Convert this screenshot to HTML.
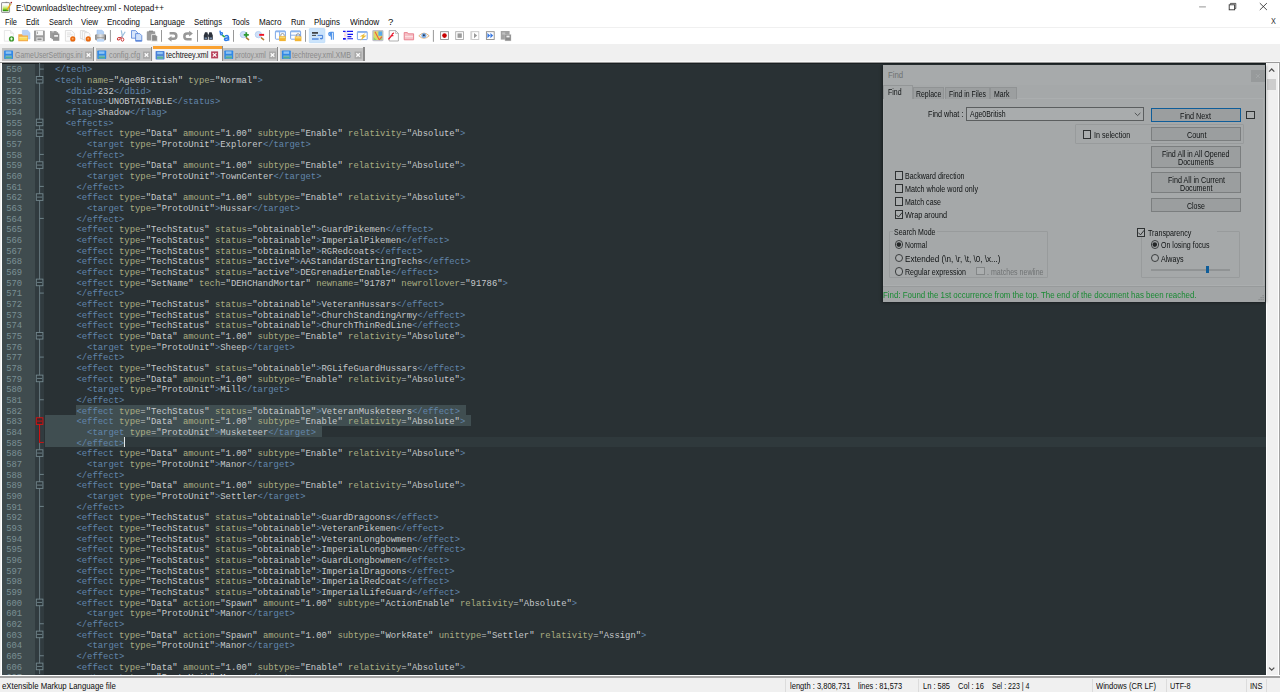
<!DOCTYPE html>
<html><head><meta charset="utf-8"><title>Notepad++</title>
<style>
*{margin:0;padding:0;box-sizing:border-box}
html,body{width:1280px;height:692px;overflow:hidden;background:#fff}
body{position:relative;font-family:"Liberation Sans",sans-serif;font-size:8px;color:#000;line-height:1}
.abs,.ln,.cl,.sel,.cur,.caret,.fold,.t{position:absolute}
.t{white-space:nowrap;transform-origin:0 50%}
#edwrap{position:absolute;left:0;top:0;width:1280px;height:692px;overflow:hidden;clip-path:inset(60px 0 14px 0)}
.ln,.cl{font-family:"Liberation Mono",monospace;font-size:8.889px;line-height:10.667px;height:10.667px;white-space:pre}
.ln,.cl{margin-top:1.8px}
.ln{left:2px;width:20.2px;text-align:right;color:#7b9094}
.cl{color:#c6c9cb}
.cl span.g{color:#6286ab}
.cl span.a{color:#aaad82}
.cl span.v{color:#c6c9cb}
.sel{height:10.667px;background:#404e51}
.cur{left:44.5px;width:1221px;height:10.667px;background:#2f393c}
.caret{width:0.8px;height:10.667px;background:#e8e8e8}
svg{position:absolute;overflow:visible}
.chk{position:absolute;width:8.6px;height:8.6px;border:0.75px solid #444;background:#fbfbfb}
.rad{position:absolute;width:8.6px;height:8.6px;border:0.75px solid #444;background:#fbfbfb;border-radius:50%}
</style></head>
<body>
<!-- title bar -->
<svg style="left:0;top:0" width="1280" height="692" viewBox="0 0 1280 692"><defs><linearGradient id="ig" x1="0" y1="0" x2="0" y2="1"><stop offset="0" stop-color="#f4f8ec"/><stop offset="0.3" stop-color="#dcf0a0"/>
<stop offset="0.62" stop-color="#a4dc30"/><stop offset="0.86" stop-color="#2f9a14"/><stop offset="1" stop-color="#1e7a0c"/></linearGradient></defs>
<rect x="1.55" y="2.6" width="8" height="9.8" rx="0.5" fill="#fbfbfb" stroke="#8a8a8a" stroke-width="0.95"/>
<rect x="2.7" y="5.2" width="5.8" height="6" fill="url(#ig)"/>
<path d="M5.6 2.3 H7.4" stroke="#777" stroke-width="0.8"/>
<path d="M10.3 3.1 L11.5 3.9 L7.9 9.9 L6.7 10.6 L6.8 9.2 Z" fill="#f0a818"/>
<path d="M10.3 3.1 L11.5 3.9 L11 4.7 L9.8 3.9 Z" fill="#a8b4c8"/>
<circle cx="11.3" cy="2.6" r="0.8" fill="#a81414"/>
<line x1="1199.1" y1="6.9" x2="1205.9" y2="6.9" stroke="#8a8a8a" stroke-width="0.9"/>
<path d="M1230.4 4.6 L1230.4 3.4 L1235.8 3.4 L1235.8 8.6 L1234.8 8.6" fill="none" stroke="#333" stroke-width="0.8"/>
<rect x="1229.2" y="4.8" width="5.4" height="5" fill="#fff" stroke="#333" stroke-width="0.9"/>
<path d="M1259.8 3.1 L1266.9 10 M1266.9 3.1 L1259.8 10" stroke="#222" stroke-width="0.8" fill="none"/>
</svg>
<span class="t" style="left:1270.70px;top:16.09px;font-size:9.30px;line-height:11.62px;color:#333;transform:scaleX(0.78);">X</span>
<span class="t" style="left:15.60px;top:2.10px;font-size:9.60px;line-height:12.00px;color:#0c0c0c;transform:scaleX(0.8490);">E:\Downloads\techtreey.xml - Notepad++</span>
<!-- menu bar -->
<span class="t" style="left:5.00px;top:15.91px;font-size:9.50px;line-height:11.88px;color:#0c0c0c;transform:scaleX(0.7837);">File</span>
<span class="t" style="left:26.00px;top:15.91px;font-size:9.50px;line-height:11.88px;color:#0c0c0c;transform:scaleX(0.7939);">Edit</span>
<span class="t" style="left:48.50px;top:15.91px;font-size:9.50px;line-height:11.88px;color:#0c0c0c;transform:scaleX(0.7805);">Search</span>
<span class="t" style="left:81.00px;top:15.91px;font-size:9.50px;line-height:11.88px;color:#0c0c0c;transform:scaleX(0.8324);">View</span>
<span class="t" style="left:107.00px;top:15.91px;font-size:9.50px;line-height:11.88px;color:#0c0c0c;transform:scaleX(0.8328);">Encoding</span>
<span class="t" style="left:150.00px;top:15.91px;font-size:9.50px;line-height:11.88px;color:#0c0c0c;transform:scaleX(0.8278);">Language</span>
<span class="t" style="left:194.00px;top:15.91px;font-size:9.50px;line-height:11.88px;color:#0c0c0c;transform:scaleX(0.8157);">Settings</span>
<span class="t" style="left:231.50px;top:15.91px;font-size:9.50px;line-height:11.88px;color:#0c0c0c;transform:scaleX(0.7887);">Tools</span>
<span class="t" style="left:258.50px;top:15.91px;font-size:9.50px;line-height:11.88px;color:#0c0c0c;transform:scaleX(0.8521);">Macro</span>
<span class="t" style="left:290.50px;top:15.91px;font-size:9.50px;line-height:11.88px;color:#0c0c0c;transform:scaleX(0.8029);">Run</span>
<span class="t" style="left:314.00px;top:15.91px;font-size:9.50px;line-height:11.88px;color:#0c0c0c;transform:scaleX(0.8341);">Plugins</span>
<span class="t" style="left:349.50px;top:15.91px;font-size:9.50px;line-height:11.88px;color:#0c0c0c;transform:scaleX(0.8669);">Window</span>
<span class="t" style="left:388.00px;top:15.91px;font-size:9.50px;line-height:11.88px;color:#0c0c0c;">?</span>
<div class="abs" style="left:0;top:27px;width:1280px;height:0.7px;background:#f0f0f0"></div>
<!-- toolbar -->
<svg style="left:0;top:0" width="1280" height="692" viewBox="0 0 1280 692"><line x1="110.4" y1="30" x2="110.4" y2="41.8" stroke="#8c8c8c" stroke-width="0.9"/><line x1="161.5" y1="30" x2="161.5" y2="41.8" stroke="#8c8c8c" stroke-width="0.9"/><line x1="197.5" y1="30" x2="197.5" y2="41.8" stroke="#8c8c8c" stroke-width="0.9"/><line x1="233.5" y1="30" x2="233.5" y2="41.8" stroke="#8c8c8c" stroke-width="0.9"/><line x1="269.5" y1="30" x2="269.5" y2="41.8" stroke="#8c8c8c" stroke-width="0.9"/><line x1="305.5" y1="30" x2="305.5" y2="41.8" stroke="#8c8c8c" stroke-width="0.9"/><line x1="433.4" y1="30" x2="433.4" y2="41.8" stroke="#8c8c8c" stroke-width="0.9"/><path d="M4.4 30.5 H10.6 L13.4 33.3 V41.2 H4.4 Z" fill="#fdfdfd" stroke="#dcdcdc" stroke-width="0.7"/><path d="M10.6 30.5 V33.3 H13.4" fill="#f2f2f2" stroke="#dcdcdc" stroke-width="0.6"/><circle cx="11.5" cy="38.9" r="2.6" fill="#3c9a2c"/><path d="M11.5 37.5 V40.3 M10.1 38.9 H12.9" stroke="#e8f8e0" stroke-width="1"/><path d="M22.4 30.3 H27.6 L30 32.7 V39 H22.4 Z" fill="#b8d2f6" stroke="#a0c0f0" stroke-width="0.5"/><path d="M18.3 34.2 H22 L22.8 35.4 H28 V41.3 H18.3 Z" fill="#f2a84a"/><rect x="19.3" y="36.6" width="8" height="3.6" fill="#f8d858"/><rect x="19.3" y="37.3" width="8" height="0.8" fill="#fbe89a"/><rect x="34" y="30.4" width="10.8" height="10.9" rx="0.6" fill="#9b9b9b"/><rect x="36.2" y="30.9" width="6.8" height="4.4" fill="#f6f6f6"/><rect x="37" y="31.6" width="0.8" height="2.4" fill="#9b9b9b"/><rect x="36.4" y="37.4" width="6.4" height="3.9" fill="#e6e6e6"/><rect x="37.4" y="38.4" width="4.2" height="1.7" fill="#8e8e8e"/><rect x="50" y="31" width="6.6" height="7" fill="#a0a0a0"/><rect x="51.5" y="32.2" width="6.6" height="7" fill="#9a9a9a"/><rect x="53" y="33.6" width="6.3" height="7.2" fill="#949494"/><rect x="54.2" y="35" width="3.8" height="1.8" fill="#efefef"/><rect x="51.6" y="31.4" width="2.4" height="0.9" fill="#dcdcdc"/><path d="M65.4 30.5 H71.6 L74.4 33.3 V41.2 H65.4 Z" fill="#fbfbfb" stroke="#d4d4d4" stroke-width="0.7"/><path d="M67 33 H71 M67 34.8 H72.6 M67 36.6 H70" stroke="#d0d0d0" stroke-width="0.6"/><circle cx="72.8" cy="38.9" r="2.6" fill="#e8680e"/><circle cx="72.7" cy="38.7" r="1" fill="#f8a868"/><path d="M80.4 30.5 H84.6 L86 32 V38.6 H80.4 Z" fill="#fbfbfb" stroke="#d4d4d4" stroke-width="0.7"/><path d="M82.4 31.4 H86.6 L88 33 V39.6 H82.4 Z" fill="#fbfbfb" stroke="#d4d4d4" stroke-width="0.7"/><path d="M84.6 32.6 H88.4 L90 34.2 V41 H84.6 Z" fill="#fbfbfb" stroke="#d4d4d4" stroke-width="0.7"/><circle cx="88.3" cy="38.9" r="2.6" fill="#e8680e"/><circle cx="88.2" cy="38.7" r="1" fill="#f8a868"/><defs><linearGradient id="pg" x1="0" x2="1"><stop offset="0" stop-color="#6a6a6a"/><stop offset="0.18" stop-color="#b8b8b8"/><stop offset="0.5" stop-color="#e4e4e4"/><stop offset="0.82" stop-color="#b0b0b0"/><stop offset="1" stop-color="#505050"/></linearGradient></defs><path d="M97 30.2 H102 L103.6 31.8 V35 H97 Z" fill="#b6d2f4" stroke="#8ab4ec" stroke-width="0.5"/><rect x="95.2" y="34.2" width="10.8" height="6.2" rx="1.4" fill="url(#pg)"/><rect x="97" y="39" width="7" height="2.7" fill="#bcd6f6"/><rect x="97" y="37.4" width="7" height="0.7" fill="#8c8c8c"/><path d="M121.3 30.4 L122.6 37.6 M125.2 31.8 L121.4 37.8" stroke="#9cc0dc" stroke-width="1.2" fill="none"/><ellipse cx="118.8" cy="38.7" rx="1.5" ry="1.2" fill="none" stroke="#cc3030" stroke-width="0.95" transform="rotate(-20 118.8 38.7)"/><ellipse cx="122.5" cy="39.6" rx="1.3" ry="1.6" fill="none" stroke="#cc3030" stroke-width="0.95"/><path d="M120 37.8 L121.8 36.9" stroke="#cc3030" stroke-width="0.9"/><path d="M131.5 30.6 H135.6 L137.6 32.6 V38.2 H131.5 Z" fill="#d8e6fb" stroke="#4a7ad4" stroke-width="0.75"/><path d="M135.6 33.6 H139.8 L141.8 35.6 V41.2 H135.6 Z" fill="#cfe0f9" stroke="#4a7ad4" stroke-width="0.75"/><rect x="136" y="40.2" width="5.6" height="1" fill="#4a7ad4"/><rect x="146.8" y="31.2" width="8.4" height="9.2" rx="0.8" fill="#9c9c9c"/><rect x="149" y="30.6" width="4" height="1.6" fill="#8a8a8a"/><path d="M151.6 34.6 H155.4 L157.4 36.6 V41.2 H151.6 Z" fill="#8c8c8c" stroke="#f4f4f4" stroke-width="0.8"/><path d="M169.6 33.3 H173.6 A2.75 2.75 0 0 1 173.6 38.8 H171" fill="none" stroke="#989898" stroke-width="2.5"/><path d="M167.7 38.8 L171.5 35.9 V41.7 Z" fill="#989898"/><path d="M189.6 33.6 H187.2 A2.85 2.85 0 0 0 187.2 39.3 H191.6" fill="none" stroke="#989898" stroke-width="2.5"/><path d="M192.9 33.6 L189.1 30.7 V36.5 Z" fill="#989898"/><path d="M205 32.2 H207.4 L207.9 34.4 V39.8 H203.8 V35.6 Z" fill="#2c323c"/><path d="M209.2 32.2 H211.6 L212.8 35.6 V39.8 H208.7 V34.4 Z" fill="#2c323c"/><rect x="207.6" y="34.6" width="1.4" height="2.2" fill="#3a424e"/><rect x="204.6" y="37.4" width="2.4" height="1.6" fill="#7088a8"/><rect x="209.6" y="37.4" width="2.4" height="1.6" fill="#7088a8"/><path d="M220 30.6 L220.6 34.6 M220.4 33 Q222.4 32 222.4 33.8 Q222 35.2 220.6 34.6" fill="none" stroke="#2a7ae8" stroke-width="1.3"/><path d="M222.2 35.2 L224.8 37.2" stroke="#30a848" stroke-width="1.6"/><path d="M225 36 Q228.6 34.6 228.4 37.4 L228.6 40.6 M228.4 38 Q224.4 37.6 224.6 39.6 Q225.4 41.4 228.4 39.6" fill="none" stroke="#2a7ae8" stroke-width="1.6"/><path d="M246.4 37.8 L248.6 39.6" stroke="#b07830" stroke-width="1.5" stroke-linecap="round"/><circle cx="243.4" cy="34.6" r="3.2" fill="#cfe0f8" stroke="#a8c6ee" stroke-width="0.7"/><path d="M246.3 32.3 V37.3 M243.8 34.8 H248.8" stroke="#2e9a30" stroke-width="1.7"/><path d="M261.4 37.8 L263.6 39.6" stroke="#b07830" stroke-width="1.5" stroke-linecap="round"/><circle cx="258.4" cy="34.6" r="3.2" fill="#cfe0f8" stroke="#a8c6ee" stroke-width="0.7"/><rect x="259.2" y="33.9" width="4.9" height="1.9" fill="#f01424"/><rect x="275.4" y="31" width="10" height="8.2" rx="0.8" fill="#fff" stroke="#6e9ce2" stroke-width="0.9"/><rect x="275.4" y="30.8" width="10" height="1.5" fill="#8ab4ee"/><line x1="279.6" y1="32" x2="279.6" y2="39" stroke="#6e9ce2" stroke-width="0.8"/><path d="M280.8 36.4 V35.2 A1.7 1.7 0 0 1 284.2 35.2 V36.4" fill="none" stroke="#8e8e8e" stroke-width="0.9"/><rect x="279.2" y="36.2" width="6.6" height="4.9" fill="#f2b432"/><rect x="279.8" y="36.8" width="5.4" height="1.4" fill="#f9d870"/><rect x="290.6" y="31" width="10" height="8.2" rx="0.8" fill="#fff" stroke="#6e9ce2" stroke-width="0.9"/><rect x="290.6" y="30.8" width="10" height="1.5" fill="#8ab4ee"/><line x1="290.6" y1="35.2" x2="300.6" y2="35.2" stroke="#6e9ce2" stroke-width="0.8"/><path d="M296.4 36.6 V35.4 A1.7 1.7 0 0 1 299.8 35.4 V36.6" fill="none" stroke="#8e8e8e" stroke-width="0.9"/><rect x="294.8" y="36.4" width="6.6" height="4.8" fill="#f2b432"/><rect x="295.4" y="37" width="5.4" height="1.4" fill="#f9d870"/><rect x="309.3" y="28.5" width="15.6" height="14.2" rx="0.8" fill="#cce4fb" stroke="#b4d6f8" stroke-width="0.6"/><rect x="312" y="32.1" width="6" height="1.6" fill="#333"/><rect x="312" y="34.9" width="4" height="0.9" fill="#333"/><path d="M317.6 35.4 H322.6 V38.6 H320.6" fill="none" stroke="#3c78d8" stroke-width="0.9"/><path d="M319.8 38.6 L321.4 37.4 V39.8 Z" fill="#3c78d8"/><rect x="312" y="38.2" width="6.6" height="1.6" fill="#5a90e2"/><path d="M333.6 32.2 H330.6 A1.9 1.9 0 0 0 330.6 36 H331 M331.4 32.2 V39.8 M333.3 32.2 V39.8" fill="none" stroke="#4a90e8" stroke-width="1.1"/><path d="M331 32.4 A1.7 1.7 0 0 0 331 35.8 Z" fill="#4a90e8"/><path d="M343 31.4 H345.6 M346.8 31.4 H353 M347.4 34.4 H353 M347.4 36.6 H351.4 M347.4 38.8 H353" stroke="#1414f0" stroke-width="1.1"/><rect x="343" y="38" width="2.8" height="1.7" fill="#1414f0"/><line x1="345" y1="32.4" x2="345" y2="37.6" stroke="#f08090" stroke-width="0.9" stroke-dasharray="0.8 0.6"/><line x1="346.9" y1="32" x2="346.9" y2="41.6" stroke="#8c8cf0" stroke-width="0.5" stroke-dasharray="0.8 0.6"/><rect x="357.4" y="31.6" width="9.8" height="8" rx="0.6" fill="#fff" stroke="#6e9ce2" stroke-width="0.9"/><rect x="357.4" y="31.4" width="9.8" height="1.5" fill="#8ab4ee"/><path d="M365.6 33 L359.6 36.6 H362.6 L360.4 40.8 L366.6 35.6 H363.6 Z" fill="#eabc38"/><rect x="372.2" y="30" width="11.3" height="11.2" rx="1.4" fill="#c2c2cc"/><rect x="373.6" y="31.4" width="8.6" height="8.6" fill="#dcdc62"/><rect x="378.4" y="31.4" width="3.8" height="4.4" fill="#58a8ea"/><path d="M373.6 37 L376.6 40 H373.6 Z" fill="#86d474"/><path d="M380.4 37.6 L382.2 36.8 V40 H379.2 Z" fill="#9adc80"/><path d="M375 31.8 L379.2 39.8 M382 36.6 L379.2 39.8" stroke="#f05a40" stroke-width="1.05" fill="none"/><path d="M389.2 30.6 H395.6 L398.4 33.4 V41 H389.2 Z" fill="#fdfdfd" stroke="#9c9c9c" stroke-width="0.8"/><path d="M395.6 30.6 V33.4 H398.4" fill="none" stroke="#9c9c9c" stroke-width="0.6"/><path d="M388.4 39.4 L391.6 35.6 Q392.4 33 394 33.2 M390.6 35.6 H393.4" stroke="#e81c30" stroke-width="1.35" fill="none"/><path d="M404.2 32.6 H407.4 L408.2 33.8 H413.6 V39.8 H404.2 Z" fill="#f6c0c6" stroke="#e46e7e" stroke-width="0.8"/><rect x="405" y="36" width="8" height="1.2" fill="#fae0e2"/><path d="M418.8 35.8 Q424 30.4 429.2 35.8 Q424 40.8 418.8 35.8 Z" fill="#fdfaf4" stroke="#d8a468" stroke-width="0.8"/><circle cx="423.9" cy="35.5" r="2.5" fill="#7aaae4"/><circle cx="423.9" cy="35.3" r="1" fill="#283850"/><rect x="440.6" y="31.7" width="7.8" height="7.8" fill="#fff" stroke="#8a8a8a" stroke-width="0.9"/><circle cx="444.5" cy="35.6" r="2.3" fill="#c80000"/><rect x="455.7" y="31.7" width="7.8" height="7.8" fill="#fff" stroke="#aaaaaa" stroke-width="0.9"/><rect x="457.5" y="33.4" width="4.3" height="4.4" fill="#9a9a9a"/><rect x="471" y="31.7" width="7.8" height="7.8" fill="#fff" stroke="#c4c4c4" stroke-width="0.9"/><rect x="470.7" y="31.4" width="1.5" height="8.4" fill="#d4d4d4"/><path d="M474 33 L477.2 35.6 L474 38.3 Z" fill="#9a9a9a"/><rect x="486.4" y="31.7" width="7.8" height="7.8" fill="#fff" stroke="#8a8a8a" stroke-width="0.9"/><path d="M487.4 33 L490.2 35.6 L487.4 38.3 Z M490.4 33 L493.2 35.6 L490.4 38.3 Z" fill="#3a7ae2"/><rect x="500.8" y="31" width="8.8" height="8.6" fill="#a2a2a2"/><rect x="502.2" y="32.4" width="3" height="2.2" fill="#c2c2c2"/><rect x="505" y="34.6" width="6" height="6.3" fill="#8a8a8a" stroke="#c8c8c8" stroke-width="0.4"/><rect x="506.4" y="35.6" width="3.2" height="1.8" fill="#f0f0f0"/></svg>
<!-- tab bar -->
<div class="abs" style="left:0;top:44.1px;width:1280px;height:18px;background:#f0f0f0"></div>
<div class="abs" style="left:2.40px;top:47.60px;width:91.60px;height:13.60px;background:#c2c2c2;"></div>
<div class="abs" style="left:92.90px;top:47.20px;width:1.50px;height:13.90px;background:#8c8c8c;"></div>
<span class="t" style="left:14.50px;top:49.60px;font-size:8.80px;line-height:11.00px;color:#8a8a8a;transform:scaleX(0.7889);">GameUserSettings.ini</span>
<div class="abs" style="left:95.60px;top:47.60px;width:56.20px;height:13.60px;background:#c2c2c2;"></div>
<div class="abs" style="left:150.70px;top:47.20px;width:1.50px;height:13.90px;background:#8c8c8c;"></div>
<span class="t" style="left:108.60px;top:49.60px;font-size:8.80px;line-height:11.00px;color:#8a8a8a;transform:scaleX(0.8285);">config.cfg</span>
<div class="abs" style="left:222.60px;top:47.60px;width:55.20px;height:13.60px;background:#c2c2c2;"></div>
<div class="abs" style="left:276.70px;top:47.20px;width:1.50px;height:13.90px;background:#8c8c8c;"></div>
<span class="t" style="left:235.00px;top:49.60px;font-size:8.80px;line-height:11.00px;color:#8a8a8a;transform:scaleX(0.7715);">protoy.xml</span>
<div class="abs" style="left:280.20px;top:47.60px;width:84.20px;height:13.60px;background:#c2c2c2;"></div>
<div class="abs" style="left:363.30px;top:47.20px;width:1.50px;height:13.90px;background:#8c8c8c;"></div>
<span class="t" style="left:292.00px;top:49.60px;font-size:8.80px;line-height:11.00px;color:#8a8a8a;transform:scaleX(0.8063);">techtreey.xml.XMB</span>
<div class="abs" style="left:153.00px;top:46.00px;width:69.60px;height:16.00px;background:#f4f4f4;"></div>
<div class="abs" style="left:153.00px;top:46.00px;width:69.60px;height:2.60px;background:#faa232;"></div>
<div class="abs" style="left:221.60px;top:46.40px;width:1.20px;height:14.60px;background:#8c8c8c;"></div>
<span class="t" style="left:166.00px;top:49.80px;font-size:8.80px;line-height:11.00px;color:#101010;transform:scaleX(0.8208);">techtreey.xml</span>
<svg style="left:0;top:0" width="1280" height="692" viewBox="0 0 1280 692"><g transform="translate(4.10,50.60)"><rect x="0" y="0" width="8.9" height="8.4" rx="0.7" fill="#3088e6"/><rect x="1.6" y="0.8" width="5.6" height="2.4" fill="#8fc4f4"/><rect x="1.4" y="4.8" width="6.2" height="3.2" fill="#78b4c0"/><rect x="1.4" y="6.2" width="6.2" height="1.4" fill="#52b090"/></g><rect x="85.00" y="51.5" width="7" height="7.2" fill="#a9a9a9"/><path d="M86.70 53.2 l3.6 3.6 m0 -3.6 l-3.6 3.6" stroke="#fafafa" stroke-width="1.35" fill="none"/><g transform="translate(97.30,50.60)"><rect x="0" y="0" width="8.9" height="8.4" rx="0.7" fill="#3088e6"/><rect x="1.6" y="0.8" width="5.6" height="2.4" fill="#8fc4f4"/><rect x="1.4" y="4.8" width="6.2" height="3.2" fill="#78b4c0"/><rect x="1.4" y="6.2" width="6.2" height="1.4" fill="#52b090"/></g><rect x="143.00" y="51.5" width="7" height="7.2" fill="#a9a9a9"/><path d="M144.70 53.2 l3.6 3.6 m0 -3.6 l-3.6 3.6" stroke="#fafafa" stroke-width="1.35" fill="none"/><g transform="translate(224.30,50.60)"><rect x="0" y="0" width="8.9" height="8.4" rx="0.7" fill="#3088e6"/><rect x="1.6" y="0.8" width="5.6" height="2.4" fill="#8fc4f4"/><rect x="1.4" y="4.8" width="6.2" height="3.2" fill="#78b4c0"/><rect x="1.4" y="6.2" width="6.2" height="1.4" fill="#52b090"/></g><rect x="269.00" y="51.5" width="7" height="7.2" fill="#a9a9a9"/><path d="M270.70 53.2 l3.6 3.6 m0 -3.6 l-3.6 3.6" stroke="#fafafa" stroke-width="1.35" fill="none"/><g transform="translate(281.90,50.60)"><rect x="0" y="0" width="8.9" height="8.4" rx="0.7" fill="#3088e6"/><rect x="1.6" y="0.8" width="5.6" height="2.4" fill="#8fc4f4"/><rect x="1.4" y="4.8" width="6.2" height="3.2" fill="#78b4c0"/><rect x="1.4" y="6.2" width="6.2" height="1.4" fill="#52b090"/></g><rect x="354.60" y="51.5" width="7" height="7.2" fill="#a9a9a9"/><path d="M356.30 53.2 l3.6 3.6 m0 -3.6 l-3.6 3.6" stroke="#fafafa" stroke-width="1.35" fill="none"/><g transform="translate(155.60,51.00)"><rect x="0" y="0" width="8.9" height="8.4" rx="0.7" fill="#4a7fd8"/><rect x="1.6" y="0.8" width="5.6" height="2.4" fill="#8fc4f4"/><rect x="1.4" y="4.8" width="6.2" height="3.2" fill="#78b4c0"/><rect x="1.4" y="6.2" width="6.2" height="1.4" fill="#52b090"/></g><rect x="211.1" y="51.4" width="7" height="7" fill="#b8425c"/><path d="M212.8 53.1 l3.6 3.6 m0 -3.6 l-3.6 3.6" stroke="#fff" stroke-width="1.2" fill="none"/></svg>
<!-- editor -->
<div id="edwrap">
<div class="abs" style="left:0;top:60.6px;width:1280px;height:1.7px;background:#f8f8f8"></div>
<div class="abs" style="left:0;top:62px;width:1280px;height:1.1px;background:#9a9a9a"></div>
<div class="abs" style="left:1.8px;top:63px;width:1277px;height:611.5px;background:#293134"></div>
<div class="abs" style="left:1.8px;top:63px;width:1277px;height:0.9px;background:#1a2022"></div>
<div class="abs" style="left:0;top:63px;width:1px;height:613px;background:#f0f0f0"></div>
<div class="abs" style="left:1px;top:63px;width:1px;height:613px;background:#fff"></div>
<div class="abs" style="left:2px;top:63.8px;width:33.2px;height:611px;background:#3f4b4e"></div>
<div class="abs" style="left:35.2px;top:63.8px;width:8.9px;height:611px;background:#313b3f"></div>
<div class="ln" style="top:63.45px">550</div>
<div class="cl" style="top:63.45px;left:55.12px"><span class="g">&lt;/tech&gt;</span></div>
<div class="ln" style="top:74.12px">551</div>
<div class="cl" style="top:74.12px;left:55.12px"><span class="g">&lt;tech</span> <span class="a">name</span><span class="v">="Age0British"</span> <span class="a">type</span><span class="v">="Normal"</span><span class="g">&gt;</span></div>
<div class="ln" style="top:84.78px">552</div>
<div class="cl" style="top:84.78px;left:65.78px"><span class="g">&lt;dbid&gt;</span><span class="v">232</span><span class="g">&lt;/dbid&gt;</span></div>
<div class="ln" style="top:95.45px">553</div>
<div class="cl" style="top:95.45px;left:65.78px"><span class="g">&lt;status&gt;</span><span class="v">UNOBTAINABLE</span><span class="g">&lt;/status&gt;</span></div>
<div class="ln" style="top:106.12px">554</div>
<div class="cl" style="top:106.12px;left:65.78px"><span class="g">&lt;flag&gt;</span><span class="v">Shadow</span><span class="g">&lt;/flag&gt;</span></div>
<div class="ln" style="top:116.78px">555</div>
<div class="cl" style="top:116.78px;left:65.78px"><span class="g">&lt;effects&gt;</span></div>
<div class="ln" style="top:127.45px">556</div>
<div class="cl" style="top:127.45px;left:76.45px"><span class="g">&lt;effect</span> <span class="a">type</span><span class="v">="Data"</span> <span class="a">amount</span><span class="v">="1.00"</span> <span class="a">subtype</span><span class="v">="Enable"</span> <span class="a">relativity</span><span class="v">="Absolute"</span><span class="g">&gt;</span></div>
<div class="ln" style="top:138.12px">557</div>
<div class="cl" style="top:138.12px;left:87.12px"><span class="g">&lt;target</span> <span class="a">type</span><span class="v">="ProtoUnit"</span><span class="g">&gt;</span><span class="v">Explorer</span><span class="g">&lt;/target&gt;</span></div>
<div class="ln" style="top:148.78px">558</div>
<div class="cl" style="top:148.78px;left:76.45px"><span class="g">&lt;/effect&gt;</span></div>
<div class="ln" style="top:159.45px">559</div>
<div class="cl" style="top:159.45px;left:76.45px"><span class="g">&lt;effect</span> <span class="a">type</span><span class="v">="Data"</span> <span class="a">amount</span><span class="v">="1.00"</span> <span class="a">subtype</span><span class="v">="Enable"</span> <span class="a">relativity</span><span class="v">="Absolute"</span><span class="g">&gt;</span></div>
<div class="ln" style="top:170.12px">560</div>
<div class="cl" style="top:170.12px;left:87.12px"><span class="g">&lt;target</span> <span class="a">type</span><span class="v">="ProtoUnit"</span><span class="g">&gt;</span><span class="v">TownCenter</span><span class="g">&lt;/target&gt;</span></div>
<div class="ln" style="top:180.78px">561</div>
<div class="cl" style="top:180.78px;left:76.45px"><span class="g">&lt;/effect&gt;</span></div>
<div class="ln" style="top:191.45px">562</div>
<div class="cl" style="top:191.45px;left:76.45px"><span class="g">&lt;effect</span> <span class="a">type</span><span class="v">="Data"</span> <span class="a">amount</span><span class="v">="1.00"</span> <span class="a">subtype</span><span class="v">="Enable"</span> <span class="a">relativity</span><span class="v">="Absolute"</span><span class="g">&gt;</span></div>
<div class="ln" style="top:202.12px">563</div>
<div class="cl" style="top:202.12px;left:87.12px"><span class="g">&lt;target</span> <span class="a">type</span><span class="v">="ProtoUnit"</span><span class="g">&gt;</span><span class="v">Hussar</span><span class="g">&lt;/target&gt;</span></div>
<div class="ln" style="top:212.78px">564</div>
<div class="cl" style="top:212.78px;left:76.45px"><span class="g">&lt;/effect&gt;</span></div>
<div class="ln" style="top:223.45px">565</div>
<div class="cl" style="top:223.45px;left:76.45px"><span class="g">&lt;effect</span> <span class="a">type</span><span class="v">="TechStatus"</span> <span class="a">status</span><span class="v">="obtainable"</span><span class="g">&gt;</span><span class="v">GuardPikemen</span><span class="g">&lt;/effect&gt;</span></div>
<div class="ln" style="top:234.12px">566</div>
<div class="cl" style="top:234.12px;left:76.45px"><span class="g">&lt;effect</span> <span class="a">type</span><span class="v">="TechStatus"</span> <span class="a">status</span><span class="v">="obtainable"</span><span class="g">&gt;</span><span class="v">ImperialPikemen</span><span class="g">&lt;/effect&gt;</span></div>
<div class="ln" style="top:244.78px">567</div>
<div class="cl" style="top:244.78px;left:76.45px"><span class="g">&lt;effect</span> <span class="a">type</span><span class="v">="TechStatus"</span> <span class="a">status</span><span class="v">="obtainable"</span><span class="g">&gt;</span><span class="v">RGRedcoats</span><span class="g">&lt;/effect&gt;</span></div>
<div class="ln" style="top:255.45px">568</div>
<div class="cl" style="top:255.45px;left:76.45px"><span class="g">&lt;effect</span> <span class="a">type</span><span class="v">="TechStatus"</span> <span class="a">status</span><span class="v">="active"</span><span class="g">&gt;</span><span class="v">AAStandardStartingTechs</span><span class="g">&lt;/effect&gt;</span></div>
<div class="ln" style="top:266.12px">569</div>
<div class="cl" style="top:266.12px;left:76.45px"><span class="g">&lt;effect</span> <span class="a">type</span><span class="v">="TechStatus"</span> <span class="a">status</span><span class="v">="active"</span><span class="g">&gt;</span><span class="v">DEGrenadierEnable</span><span class="g">&lt;/effect&gt;</span></div>
<div class="ln" style="top:276.78px">570</div>
<div class="cl" style="top:276.78px;left:76.45px"><span class="g">&lt;effect</span> <span class="a">type</span><span class="v">="SetName"</span> <span class="a">tech</span><span class="v">="DEHCHandMortar"</span> <span class="a">newname</span><span class="v">="91787"</span> <span class="a">newrollover</span><span class="v">="91786"</span><span class="g">&gt;</span></div>
<div class="ln" style="top:287.45px">571</div>
<div class="cl" style="top:287.45px;left:76.45px"><span class="g">&lt;/effect&gt;</span></div>
<div class="ln" style="top:298.12px">572</div>
<div class="cl" style="top:298.12px;left:76.45px"><span class="g">&lt;effect</span> <span class="a">type</span><span class="v">="TechStatus"</span> <span class="a">status</span><span class="v">="obtainable"</span><span class="g">&gt;</span><span class="v">VeteranHussars</span><span class="g">&lt;/effect&gt;</span></div>
<div class="ln" style="top:308.78px">573</div>
<div class="cl" style="top:308.78px;left:76.45px"><span class="g">&lt;effect</span> <span class="a">type</span><span class="v">="TechStatus"</span> <span class="a">status</span><span class="v">="obtainable"</span><span class="g">&gt;</span><span class="v">ChurchStandingArmy</span><span class="g">&lt;/effect&gt;</span></div>
<div class="ln" style="top:319.45px">574</div>
<div class="cl" style="top:319.45px;left:76.45px"><span class="g">&lt;effect</span> <span class="a">type</span><span class="v">="TechStatus"</span> <span class="a">status</span><span class="v">="obtainable"</span><span class="g">&gt;</span><span class="v">ChurchThinRedLine</span><span class="g">&lt;/effect&gt;</span></div>
<div class="ln" style="top:330.12px">575</div>
<div class="cl" style="top:330.12px;left:76.45px"><span class="g">&lt;effect</span> <span class="a">type</span><span class="v">="Data"</span> <span class="a">amount</span><span class="v">="1.00"</span> <span class="a">subtype</span><span class="v">="Enable"</span> <span class="a">relativity</span><span class="v">="Absolute"</span><span class="g">&gt;</span></div>
<div class="ln" style="top:340.78px">576</div>
<div class="cl" style="top:340.78px;left:87.12px"><span class="g">&lt;target</span> <span class="a">type</span><span class="v">="ProtoUnit"</span><span class="g">&gt;</span><span class="v">Sheep</span><span class="g">&lt;/target&gt;</span></div>
<div class="ln" style="top:351.45px">577</div>
<div class="cl" style="top:351.45px;left:76.45px"><span class="g">&lt;/effect&gt;</span></div>
<div class="ln" style="top:362.12px">578</div>
<div class="cl" style="top:362.12px;left:76.45px"><span class="g">&lt;effect</span> <span class="a">type</span><span class="v">="TechStatus"</span> <span class="a">status</span><span class="v">="obtainable"</span><span class="g">&gt;</span><span class="v">RGLifeGuardHussars</span><span class="g">&lt;/effect&gt;</span></div>
<div class="ln" style="top:372.78px">579</div>
<div class="cl" style="top:372.78px;left:76.45px"><span class="g">&lt;effect</span> <span class="a">type</span><span class="v">="Data"</span> <span class="a">amount</span><span class="v">="1.00"</span> <span class="a">subtype</span><span class="v">="Enable"</span> <span class="a">relativity</span><span class="v">="Absolute"</span><span class="g">&gt;</span></div>
<div class="ln" style="top:383.45px">580</div>
<div class="cl" style="top:383.45px;left:87.12px"><span class="g">&lt;target</span> <span class="a">type</span><span class="v">="ProtoUnit"</span><span class="g">&gt;</span><span class="v">Mill</span><span class="g">&lt;/target&gt;</span></div>
<div class="ln" style="top:394.12px">581</div>
<div class="cl" style="top:394.12px;left:76.45px"><span class="g">&lt;/effect&gt;</span></div>
<div class="sel" style="top:404.78px;left:76.45px;width:389.63px"></div>
<div class="ln" style="top:404.78px">582</div>
<div class="cl" style="top:404.78px;left:76.45px"><span class="g">&lt;effect</span> <span class="a">type</span><span class="v">="TechStatus"</span> <span class="a">status</span><span class="v">="obtainable"</span><span class="g">&gt;</span><span class="v">VeteranMusketeers</span><span class="g">&lt;/effect&gt;</span></div>
<div class="sel" style="top:415.45px;left:44.85px;width:426.56px"></div>
<div class="ln" style="top:415.45px">583</div>
<div class="cl" style="top:415.45px;left:76.45px"><span class="g">&lt;effect</span> <span class="a">type</span><span class="v">="Data"</span> <span class="a">amount</span><span class="v">="1.00"</span> <span class="a">subtype</span><span class="v">="Enable"</span> <span class="a">relativity</span><span class="v">="Absolute"</span><span class="g">&gt;</span></div>
<div class="sel" style="top:426.12px;left:44.85px;width:277.23px"></div>
<div class="ln" style="top:426.12px">584</div>
<div class="cl" style="top:426.12px;left:87.12px"><span class="g">&lt;target</span> <span class="a">type</span><span class="v">="ProtoUnit"</span><span class="g">&gt;</span><span class="v">Musketeer</span><span class="g">&lt;/target&gt;</span></div>
<div class="cur" style="top:436.78px"></div>
<div class="sel" style="top:436.78px;left:44.85px;width:79.60px"></div>
<div class="caret" style="top:436.78px;left:124.45px"></div>
<div class="ln" style="top:436.78px">585</div>
<div class="cl" style="top:436.78px;left:76.45px"><span class="g">&lt;/effect&gt;</span></div>
<div class="ln" style="top:447.45px">586</div>
<div class="cl" style="top:447.45px;left:76.45px"><span class="g">&lt;effect</span> <span class="a">type</span><span class="v">="Data"</span> <span class="a">amount</span><span class="v">="1.00"</span> <span class="a">subtype</span><span class="v">="Enable"</span> <span class="a">relativity</span><span class="v">="Absolute"</span><span class="g">&gt;</span></div>
<div class="ln" style="top:458.12px">587</div>
<div class="cl" style="top:458.12px;left:87.12px"><span class="g">&lt;target</span> <span class="a">type</span><span class="v">="ProtoUnit"</span><span class="g">&gt;</span><span class="v">Manor</span><span class="g">&lt;/target&gt;</span></div>
<div class="ln" style="top:468.78px">588</div>
<div class="cl" style="top:468.78px;left:76.45px"><span class="g">&lt;/effect&gt;</span></div>
<div class="ln" style="top:479.45px">589</div>
<div class="cl" style="top:479.45px;left:76.45px"><span class="g">&lt;effect</span> <span class="a">type</span><span class="v">="Data"</span> <span class="a">amount</span><span class="v">="1.00"</span> <span class="a">subtype</span><span class="v">="Enable"</span> <span class="a">relativity</span><span class="v">="Absolute"</span><span class="g">&gt;</span></div>
<div class="ln" style="top:490.12px">590</div>
<div class="cl" style="top:490.12px;left:87.12px"><span class="g">&lt;target</span> <span class="a">type</span><span class="v">="ProtoUnit"</span><span class="g">&gt;</span><span class="v">Settler</span><span class="g">&lt;/target&gt;</span></div>
<div class="ln" style="top:500.78px">591</div>
<div class="cl" style="top:500.78px;left:76.45px"><span class="g">&lt;/effect&gt;</span></div>
<div class="ln" style="top:511.45px">592</div>
<div class="cl" style="top:511.45px;left:76.45px"><span class="g">&lt;effect</span> <span class="a">type</span><span class="v">="TechStatus"</span> <span class="a">status</span><span class="v">="obtainable"</span><span class="g">&gt;</span><span class="v">GuardDragoons</span><span class="g">&lt;/effect&gt;</span></div>
<div class="ln" style="top:522.12px">593</div>
<div class="cl" style="top:522.12px;left:76.45px"><span class="g">&lt;effect</span> <span class="a">type</span><span class="v">="TechStatus"</span> <span class="a">status</span><span class="v">="obtainable"</span><span class="g">&gt;</span><span class="v">VeteranPikemen</span><span class="g">&lt;/effect&gt;</span></div>
<div class="ln" style="top:532.78px">594</div>
<div class="cl" style="top:532.78px;left:76.45px"><span class="g">&lt;effect</span> <span class="a">type</span><span class="v">="TechStatus"</span> <span class="a">status</span><span class="v">="obtainable"</span><span class="g">&gt;</span><span class="v">VeteranLongbowmen</span><span class="g">&lt;/effect&gt;</span></div>
<div class="ln" style="top:543.45px">595</div>
<div class="cl" style="top:543.45px;left:76.45px"><span class="g">&lt;effect</span> <span class="a">type</span><span class="v">="TechStatus"</span> <span class="a">status</span><span class="v">="obtainable"</span><span class="g">&gt;</span><span class="v">ImperialLongbowmen</span><span class="g">&lt;/effect&gt;</span></div>
<div class="ln" style="top:554.12px">596</div>
<div class="cl" style="top:554.12px;left:76.45px"><span class="g">&lt;effect</span> <span class="a">type</span><span class="v">="TechStatus"</span> <span class="a">status</span><span class="v">="obtainable"</span><span class="g">&gt;</span><span class="v">GuardLongbowmen</span><span class="g">&lt;/effect&gt;</span></div>
<div class="ln" style="top:564.78px">597</div>
<div class="cl" style="top:564.78px;left:76.45px"><span class="g">&lt;effect</span> <span class="a">type</span><span class="v">="TechStatus"</span> <span class="a">status</span><span class="v">="obtainable"</span><span class="g">&gt;</span><span class="v">ImperialDragoons</span><span class="g">&lt;/effect&gt;</span></div>
<div class="ln" style="top:575.45px">598</div>
<div class="cl" style="top:575.45px;left:76.45px"><span class="g">&lt;effect</span> <span class="a">type</span><span class="v">="TechStatus"</span> <span class="a">status</span><span class="v">="obtainable"</span><span class="g">&gt;</span><span class="v">ImperialRedcoat</span><span class="g">&lt;/effect&gt;</span></div>
<div class="ln" style="top:586.12px">599</div>
<div class="cl" style="top:586.12px;left:76.45px"><span class="g">&lt;effect</span> <span class="a">type</span><span class="v">="TechStatus"</span> <span class="a">status</span><span class="v">="obtainable"</span><span class="g">&gt;</span><span class="v">ImperialLifeGuard</span><span class="g">&lt;/effect&gt;</span></div>
<div class="ln" style="top:596.79px">600</div>
<div class="cl" style="top:596.79px;left:76.45px"><span class="g">&lt;effect</span> <span class="a">type</span><span class="v">="Data"</span> <span class="a">action</span><span class="v">="Spawn"</span> <span class="a">amount</span><span class="v">="1.00"</span> <span class="a">subtype</span><span class="v">="ActionEnable"</span> <span class="a">relativity</span><span class="v">="Absolute"</span><span class="g">&gt;</span></div>
<div class="ln" style="top:607.45px">601</div>
<div class="cl" style="top:607.45px;left:87.12px"><span class="g">&lt;target</span> <span class="a">type</span><span class="v">="ProtoUnit"</span><span class="g">&gt;</span><span class="v">Manor</span><span class="g">&lt;/target&gt;</span></div>
<div class="ln" style="top:618.12px">602</div>
<div class="cl" style="top:618.12px;left:76.45px"><span class="g">&lt;/effect&gt;</span></div>
<div class="ln" style="top:628.79px">603</div>
<div class="cl" style="top:628.79px;left:76.45px"><span class="g">&lt;effect</span> <span class="a">type</span><span class="v">="Data"</span> <span class="a">action</span><span class="v">="Spawn"</span> <span class="a">amount</span><span class="v">="1.00"</span> <span class="a">subtype</span><span class="v">="WorkRate"</span> <span class="a">unittype</span><span class="v">="Settler"</span> <span class="a">relativity</span><span class="v">="Assign"</span><span class="g">&gt;</span></div>
<div class="ln" style="top:639.45px">604</div>
<div class="cl" style="top:639.45px;left:87.12px"><span class="g">&lt;target</span> <span class="a">type</span><span class="v">="ProtoUnit"</span><span class="g">&gt;</span><span class="v">Manor</span><span class="g">&lt;/target&gt;</span></div>
<div class="ln" style="top:650.12px">605</div>
<div class="cl" style="top:650.12px;left:76.45px"><span class="g">&lt;/effect&gt;</span></div>
<div class="ln" style="top:660.79px">606</div>
<div class="cl" style="top:660.79px;left:76.45px"><span class="g">&lt;effect</span> <span class="a">type</span><span class="v">="Data"</span> <span class="a">amount</span><span class="v">="1.00"</span> <span class="a">subtype</span><span class="v">="Enable"</span> <span class="a">relativity</span><span class="v">="Absolute"</span><span class="g">&gt;</span></div>
<div class="ln" style="top:671.45px">607</div>
<div class="cl" style="top:671.45px;left:87.12px"><span class="g">&lt;target</span> <span class="a">type</span><span class="v">="ProtoUnit"</span><span class="g">&gt;</span><span class="v">Manor</span><span class="g">&lt;/target&gt;</span></div>
<svg class="fold" width="12" height="692" viewBox="0 0 12 692" style="left:34px;top:0px">
<line x1="5.60" y1="63.00" x2="5.60" y2="674.00" stroke="#74888e" stroke-width="0.8"/>
<line x1="5.60" y1="420.78" x2="5.60" y2="442.72" stroke="#293134" stroke-width="1.6"/>
<line x1="5.60" y1="420.78" x2="5.60" y2="442.72" stroke="#e01010" stroke-width="1"/>
<line x1="5.60" y1="69.08" x2="9.80" y2="69.08" stroke="#74888e" stroke-width="0.9"/>
<rect x="2.30" y="76.45" width="6.6" height="6.6" fill="#2c363a" stroke="#74888e" stroke-width="0.9"/>
<line x1="3.10" y1="79.75" x2="8.10" y2="79.75" stroke="#74888e" stroke-width="0.9"/>
<rect x="2.30" y="119.12" width="6.6" height="6.6" fill="#2c363a" stroke="#74888e" stroke-width="0.9"/>
<line x1="3.10" y1="122.42" x2="8.10" y2="122.42" stroke="#74888e" stroke-width="0.9"/>
<rect x="2.30" y="129.78" width="6.6" height="6.6" fill="#2c363a" stroke="#74888e" stroke-width="0.9"/>
<line x1="3.10" y1="133.08" x2="8.10" y2="133.08" stroke="#74888e" stroke-width="0.9"/>
<line x1="5.60" y1="154.42" x2="9.80" y2="154.42" stroke="#74888e" stroke-width="0.9"/>
<rect x="2.30" y="161.78" width="6.6" height="6.6" fill="#2c363a" stroke="#74888e" stroke-width="0.9"/>
<line x1="3.10" y1="165.08" x2="8.10" y2="165.08" stroke="#74888e" stroke-width="0.9"/>
<line x1="5.60" y1="186.42" x2="9.80" y2="186.42" stroke="#74888e" stroke-width="0.9"/>
<rect x="2.30" y="193.78" width="6.6" height="6.6" fill="#2c363a" stroke="#74888e" stroke-width="0.9"/>
<line x1="3.10" y1="197.08" x2="8.10" y2="197.08" stroke="#74888e" stroke-width="0.9"/>
<line x1="5.60" y1="218.42" x2="9.80" y2="218.42" stroke="#74888e" stroke-width="0.9"/>
<rect x="2.30" y="279.12" width="6.6" height="6.6" fill="#2c363a" stroke="#74888e" stroke-width="0.9"/>
<line x1="3.10" y1="282.42" x2="8.10" y2="282.42" stroke="#74888e" stroke-width="0.9"/>
<line x1="5.60" y1="293.08" x2="9.80" y2="293.08" stroke="#74888e" stroke-width="0.9"/>
<rect x="2.30" y="332.45" width="6.6" height="6.6" fill="#2c363a" stroke="#74888e" stroke-width="0.9"/>
<line x1="3.10" y1="335.75" x2="8.10" y2="335.75" stroke="#74888e" stroke-width="0.9"/>
<line x1="5.60" y1="357.08" x2="9.80" y2="357.08" stroke="#74888e" stroke-width="0.9"/>
<rect x="2.30" y="375.12" width="6.6" height="6.6" fill="#2c363a" stroke="#74888e" stroke-width="0.9"/>
<line x1="3.10" y1="378.42" x2="8.10" y2="378.42" stroke="#74888e" stroke-width="0.9"/>
<line x1="5.60" y1="399.75" x2="9.80" y2="399.75" stroke="#74888e" stroke-width="0.9"/>
<rect x="2.30" y="417.78" width="6.6" height="6.6" fill="#3a2b2e" stroke="#e01010" stroke-width="0.9"/>
<line x1="3.10" y1="421.08" x2="8.10" y2="421.08" stroke="#e01010" stroke-width="0.9"/>
<line x1="5.60" y1="442.42" x2="9.80" y2="442.42" stroke="#e01010" stroke-width="0.9"/>
<rect x="2.30" y="449.78" width="6.6" height="6.6" fill="#2c363a" stroke="#74888e" stroke-width="0.9"/>
<line x1="3.10" y1="453.08" x2="8.10" y2="453.08" stroke="#74888e" stroke-width="0.9"/>
<line x1="5.60" y1="474.42" x2="9.80" y2="474.42" stroke="#74888e" stroke-width="0.9"/>
<rect x="2.30" y="481.78" width="6.6" height="6.6" fill="#2c363a" stroke="#74888e" stroke-width="0.9"/>
<line x1="3.10" y1="485.08" x2="8.10" y2="485.08" stroke="#74888e" stroke-width="0.9"/>
<line x1="5.60" y1="506.42" x2="9.80" y2="506.42" stroke="#74888e" stroke-width="0.9"/>
<rect x="2.30" y="599.12" width="6.6" height="6.6" fill="#2c363a" stroke="#74888e" stroke-width="0.9"/>
<line x1="3.10" y1="602.42" x2="8.10" y2="602.42" stroke="#74888e" stroke-width="0.9"/>
<line x1="5.60" y1="623.75" x2="9.80" y2="623.75" stroke="#74888e" stroke-width="0.9"/>
<rect x="2.30" y="631.12" width="6.6" height="6.6" fill="#2c363a" stroke="#74888e" stroke-width="0.9"/>
<line x1="3.10" y1="634.42" x2="8.10" y2="634.42" stroke="#74888e" stroke-width="0.9"/>
<line x1="5.60" y1="655.75" x2="9.80" y2="655.75" stroke="#74888e" stroke-width="0.9"/>
<rect x="2.30" y="663.12" width="6.6" height="6.6" fill="#2c363a" stroke="#74888e" stroke-width="0.9"/>
<line x1="3.10" y1="666.42" x2="8.10" y2="666.42" stroke="#74888e" stroke-width="0.9"/>
</svg>
<div class="abs" style="left:1265.70px;top:63.00px;width:1.50px;height:611.50px;background:#ffffff;"></div>
<div class="abs" style="left:1267.10px;top:63.00px;width:10.70px;height:611.50px;background:#f0f0f0;"></div>
<div class="abs" style="left:1277.70px;top:63.00px;width:1.10px;height:613.00px;background:#ffffff;"></div>
<div class="abs" style="left:1278.80px;top:62.20px;width:1.20px;height:615.40px;background:#a2a2a2;"></div>
<div class="abs" style="left:1267.30px;top:79.40px;width:9.00px;height:10.60px;background:#cdcdcd;"></div>
<svg style="left:0;top:0" width="1280" height="692" viewBox="0 0 1280 692"><path d="M1269.1 71.6 L1271.7 69 L1274.3 71.6" stroke="#505050" stroke-width="1.3" fill="none"/><path d="M1269.1 667.6 L1271.7 670.2 L1274.3 667.6" stroke="#505050" stroke-width="1.3" fill="none"/></svg>
<div class="abs" style="left:0;top:0;width:1280px;height:692px;opacity:0.627"><div class="abs" style="left:882.60px;top:64.50px;width:382.80px;height:237.50px;background:#f0f0f0;box-shadow:0 0.5px 3px 0.6px rgba(0,0,0,0.75);"></div>
<div class="abs" style="left:882.60px;top:64.50px;width:382.80px;height:20.60px;background:#f4f4f4;"></div>
<span class="t" style="left:888.00px;top:69.46px;font-size:9.50px;line-height:11.88px;color:#9a9a9a;transform:scaleX(0.8223);">Find</span>
<div class="abs" style="left:1251.40px;top:70.00px;width:13.20px;height:12.40px;background:#dadada;"></div>
<div class="abs" style="left:883.40px;top:98.30px;width:380.40px;height:187.40px;border:0.7px solid #fafafa;"></div>
<div class="abs" style="left:913.20px;top:86.90px;width:31.30px;height:11.70px;background:#e2e2e2;border:0.7px solid #cfcfcf;border-bottom:none;"></div>
<span class="t" style="left:915.60px;top:88.67px;font-size:8.60px;line-height:10.75px;color:#000;transform:scaleX(0.8056);">Replace</span>
<div class="abs" style="left:944.50px;top:86.90px;width:45.00px;height:11.70px;background:#e2e2e2;border:0.7px solid #cfcfcf;border-bottom:none;"></div>
<span class="t" style="left:949.00px;top:88.67px;font-size:8.60px;line-height:10.75px;color:#000;transform:scaleX(0.7987);">Find in Files</span>
<div class="abs" style="left:989.50px;top:86.90px;width:27.00px;height:11.70px;background:#e2e2e2;border:0.7px solid #cfcfcf;border-bottom:none;"></div>
<span class="t" style="left:993.60px;top:88.67px;font-size:8.60px;line-height:10.75px;color:#000;transform:scaleX(0.8059);">Mark</span>
<div class="abs" style="left:883.20px;top:85.30px;width:30.00px;height:13.80px;background:#f0f0f0;border:0.7px solid #d4d4d4;border-bottom:none;"></div>
<span class="t" style="left:887.60px;top:87.47px;font-size:8.60px;line-height:10.75px;color:#000;transform:scaleX(0.8135);">Find</span>
<span class="t" style="left:927.60px;top:109.38px;font-size:8.60px;line-height:10.75px;color:#000;transform:scaleX(0.8419);">Find what :</span>
<div class="abs" style="left:966.00px;top:107.10px;width:177.60px;height:13.80px;background:#f7f7f7;border:0.8px solid #7a7a7a;"></div>
<span class="t" style="left:970.00px;top:109.47px;font-size:8.60px;line-height:10.75px;color:#000;transform:scaleX(0.8077);">Age0British</span>
<div class="abs" style="left:1075.00px;top:124.30px;width:169.00px;height:19.90px;border:0.7px solid #dcdcdc;border-radius:1px;"></div>
<div class="abs" style="left:1151.40px;top:107.90px;width:89.80px;height:13.90px;background:#e1e1e1;border:1.3px solid #0078d7;"></div>
<span class="t" style="left:1180.00px;top:110.57px;font-size:8.60px;line-height:10.75px;color:#000;transform:scaleX(0.8428);">Find Next</span>
<div class="chk" style="left:1246.20px;top:110.60px;border-color:#333"></div>
<div class="chk" style="left:1082.70px;top:130.20px;border-color:#333"></div>
<span class="t" style="left:1093.60px;top:129.97px;font-size:8.60px;line-height:10.75px;color:#000;transform:scaleX(0.8325);">In selection</span>
<div class="abs" style="left:1151.40px;top:127.20px;width:89.80px;height:13.60px;background:#e1e1e1;border:0.7px solid #adadad;"></div>
<span class="t" style="left:1186.60px;top:129.57px;font-size:8.60px;line-height:10.75px;color:#000;transform:scaleX(0.8458);">Count</span>
<div class="abs" style="left:1151.40px;top:146.40px;width:89.80px;height:21.50px;background:#e1e1e1;border:0.7px solid #adadad;"></div>
<span class="t" style="left:1162.00px;top:148.88px;font-size:8.60px;line-height:10.75px;color:#000;transform:scaleX(0.8262);">Find All in All Opened</span>
<span class="t" style="left:1177.60px;top:157.28px;font-size:8.60px;line-height:10.75px;color:#000;transform:scaleX(0.8259);">Documents</span>
<div class="abs" style="left:1151.40px;top:172.40px;width:89.80px;height:21.10px;background:#e1e1e1;border:0.7px solid #adadad;"></div>
<span class="t" style="left:1167.60px;top:174.78px;font-size:8.60px;line-height:10.75px;color:#000;transform:scaleX(0.8329);">Find All in Current</span>
<span class="t" style="left:1179.60px;top:183.47px;font-size:8.60px;line-height:10.75px;color:#000;transform:scaleX(0.8271);">Document</span>
<div class="abs" style="left:1151.40px;top:198.20px;width:89.80px;height:14.30px;background:#e1e1e1;border:0.7px solid #adadad;"></div>
<span class="t" style="left:1186.60px;top:201.07px;font-size:8.60px;line-height:10.75px;color:#000;transform:scaleX(0.8142);">Close</span>
<div class="chk" style="left:894.50px;top:171.30px;border-color:#333"></div>
<span class="t" style="left:905.00px;top:171.07px;font-size:8.60px;line-height:10.75px;color:#000;transform:scaleX(0.8195);">Backward direction</span>
<div class="chk" style="left:894.50px;top:184.30px;border-color:#333"></div>
<span class="t" style="left:905.00px;top:184.07px;font-size:8.60px;line-height:10.75px;color:#000;transform:scaleX(0.8350);">Match whole word only</span>
<div class="chk" style="left:894.50px;top:197.40px;border-color:#333"></div>
<span class="t" style="left:905.00px;top:197.17px;font-size:8.60px;line-height:10.75px;color:#000;transform:scaleX(0.8191);">Match case</span>
<div class="chk" style="left:894.50px;top:210.30px;border-color:#333"></div>
<span class="t" style="left:905.00px;top:210.07px;font-size:8.60px;line-height:10.75px;color:#000;transform:scaleX(0.8479);">Wrap around</span>
<div class="abs" style="left:888.70px;top:231.20px;width:159.00px;height:46.90px;border:0.7px solid #dcdcdc;border-radius:1px;"></div>
<div class="abs" style="left:892.60px;top:229.00px;width:44.60px;height:6.00px;background:#f0f0f0;"></div>
<span class="t" style="left:894.00px;top:227.47px;font-size:8.60px;line-height:10.75px;color:#000;transform:scaleX(0.8117);">Search Mode</span>
<div class="rad" style="left:894.60px;top:240.30px"></div>
<span class="t" style="left:905.00px;top:240.28px;font-size:8.60px;line-height:10.75px;color:#000;transform:scaleX(0.7941);">Normal</span>
<div class="rad" style="left:894.60px;top:253.90px"></div>
<span class="t" style="left:905.00px;top:253.78px;font-size:8.60px;line-height:10.75px;color:#000;transform:scaleX(0.9431);">Extended (\n, \r, \t, \0, \x...)</span>
<div class="rad" style="left:894.60px;top:267.00px"></div>
<span class="t" style="left:905.00px;top:266.78px;font-size:8.60px;line-height:10.75px;color:#000;transform:scaleX(0.8238);">Regular expression</span>
<div class="chk" style="left:976.30px;top:266.60px;border-color:#bcbcbc"></div>
<span class="t" style="left:987.00px;top:266.78px;font-size:8.60px;line-height:10.75px;color:#9a9a9a;transform:scaleX(0.8213);">. matches newline</span>
<div class="abs" style="left:1140.50px;top:231.40px;width:99.00px;height:47.00px;border:0.7px solid #dcdcdc;border-radius:1px;"></div>
<div class="abs" style="left:1135.00px;top:227.00px;width:81.80px;height:10.00px;background:#f0f0f0;"></div>
<div class="chk" style="left:1136.50px;top:228.00px;border-color:#333"></div>
<span class="t" style="left:1147.60px;top:227.88px;font-size:8.60px;line-height:10.75px;color:#000;transform:scaleX(0.8309);">Transparency</span>
<div class="rad" style="left:1150.50px;top:240.30px"></div>
<span class="t" style="left:1161.00px;top:240.28px;font-size:8.60px;line-height:10.75px;color:#000;transform:scaleX(0.8188);">On losing focus</span>
<div class="rad" style="left:1150.50px;top:253.90px"></div>
<span class="t" style="left:1161.00px;top:253.88px;font-size:8.60px;line-height:10.75px;color:#000;transform:scaleX(0.8262);">Always</span>
<div class="abs" style="left:1151.40px;top:268.60px;width:78.60px;height:2.00px;background:#e4e4e4;border:0.5px solid #cfcfcf;"></div>
<div class="abs" style="left:1205.90px;top:266.20px;width:3.00px;height:6.60px;background:#0078d7;"></div>
<div class="abs" style="left:882.60px;top:286.40px;width:382.80px;height:15.60px;background:#ececec;"></div>
<div class="abs" style="left:882.60px;top:286.20px;width:382.80px;height:0.70px;background:#dadada;"></div>
<span class="t" style="left:882.90px;top:289.88px;font-size:8.60px;line-height:10.75px;color:#12c034;transform:scaleX(0.9198);">Find: Found the 1st occurrence from the top. The end of the document has been reached.</span>
<svg style="left:0;top:0" width="1280" height="692" viewBox="0 0 1280 692"><path d="M1256 74.2 l3.8 3.8 m0 -3.8 l-3.8 3.8" stroke="#f2f2f2" stroke-width="0.9" fill="none"/><path d="M1134.8 112.9 L1137.6 115.6 L1140.4 112.9" stroke="#444" stroke-width="0.8" fill="none"/><path d="M896.3 214.80 l2.2 2.3 l3.6 -4.6" stroke="#222" stroke-width="0.9" fill="none"/><circle cx="898.9" cy="244.6" r="2.3" fill="#222"/><path d="M1138.3 232.6 l2.2 2.3 l3.6 -4.6" stroke="#222" stroke-width="0.9" fill="none"/><circle cx="1154.8" cy="244.6" r="2.3" fill="#222"/><rect x="1262.6" y="295.2" width="1" height="1" fill="#a8a8a8"/><rect x="1262.6" y="297.2" width="1" height="1" fill="#a8a8a8"/><rect x="1260.6" y="297.2" width="1" height="1" fill="#a8a8a8"/><rect x="1262.6" y="299.2" width="1" height="1" fill="#a8a8a8"/><rect x="1260.6" y="299.2" width="1" height="1" fill="#a8a8a8"/><rect x="1258.6" y="299.2" width="1" height="1" fill="#a8a8a8"/></svg></div>
</div>
<!-- status bar -->
<div class="abs" style="left:0.00px;top:674.50px;width:1280.00px;height:1.80px;background:#ffffff;"></div>
<div class="abs" style="left:0.00px;top:676.20px;width:1280.00px;height:1.40px;background:#a2a2a2;"></div>
<div class="abs" style="left:0.00px;top:677.60px;width:1280.00px;height:15.00px;background:#f0f0f0;"></div>
<span class="t" style="left:2.20px;top:680.06px;font-size:9.50px;line-height:11.88px;color:#0c0c0c;transform:scaleX(0.8224);">eXtensible Markup Language file</span>
<span class="t" style="left:789.50px;top:680.06px;font-size:9.50px;line-height:11.88px;color:#0c0c0c;transform:scaleX(0.7952);">length : 3,808,731</span>
<span class="t" style="left:858.00px;top:680.06px;font-size:9.50px;line-height:11.88px;color:#0c0c0c;transform:scaleX(0.7785);">lines : 81,573</span>
<span class="t" style="left:922.50px;top:680.06px;font-size:9.50px;line-height:11.88px;color:#0c0c0c;transform:scaleX(0.7862);">Ln : 585</span>
<span class="t" style="left:957.50px;top:680.06px;font-size:9.50px;line-height:11.88px;color:#0c0c0c;transform:scaleX(0.7939);">Col : 16</span>
<span class="t" style="left:991.50px;top:680.06px;font-size:9.50px;line-height:11.88px;color:#0c0c0c;transform:scaleX(0.7421);">Sel : 223 | 4</span>
<span class="t" style="left:1096.00px;top:680.06px;font-size:9.50px;line-height:11.88px;color:#0c0c0c;transform:scaleX(0.8005);">Windows (CR LF)</span>
<span class="t" style="left:1169.50px;top:680.06px;font-size:9.50px;line-height:11.88px;color:#0c0c0c;transform:scaleX(0.7615);">UTF-8</span>
<span class="t" style="left:1249.50px;top:680.06px;font-size:9.50px;line-height:11.88px;color:#0c0c0c;transform:scaleX(0.7890);">INS</span>
<div class="abs" style="left:785.40px;top:678.80px;width:1.00px;height:14.00px;background:#dcdcdc;"></div>
<div class="abs" style="left:918.40px;top:678.80px;width:1.00px;height:14.00px;background:#dcdcdc;"></div>
<div class="abs" style="left:1092.40px;top:678.80px;width:1.00px;height:14.00px;background:#dcdcdc;"></div>
<div class="abs" style="left:1165.70px;top:678.80px;width:1.00px;height:14.00px;background:#dcdcdc;"></div>
<div class="abs" style="left:1246.00px;top:678.80px;width:1.00px;height:14.00px;background:#dcdcdc;"></div>
<div class="abs" style="left:1266.00px;top:678.80px;width:1.00px;height:14.00px;background:#dcdcdc;"></div>
</body></html>
